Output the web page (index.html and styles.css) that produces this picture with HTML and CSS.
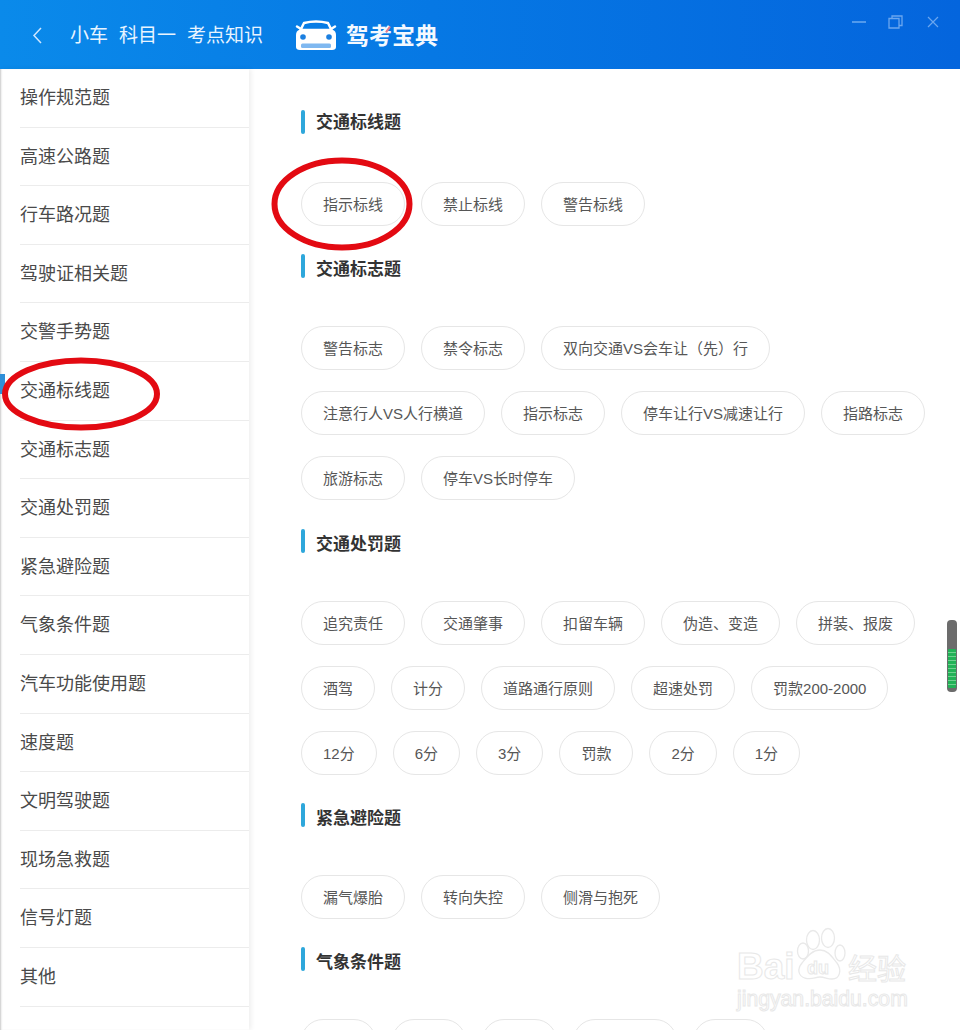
FILE: index.html
```html
<!DOCTYPE html>
<html lang="zh-CN">
<head>
<meta charset="utf-8">
<title>考点知识</title>
<link rel="stylesheet" href="styles.css">
</head>
<body>
<div class="app">
  <header class="topbar">
    <svg class="back" width="10" height="17" viewBox="0 0 10 17"><path d="M9 1L2 8.5L9 16" fill="none" stroke="#cfe6ff" stroke-width="1.5"/></svg>
    <div class="crumbs"><span>小车</span><span>科目一</span><span>考点知识</span></div>
    <div class="brand">
      <svg class="car" width="42" height="31" viewBox="0 0 42 31">
        <path d="M6 9L2 6.500M36 9L40 6.500" stroke="#fff" stroke-width="2.500" stroke-linecap="round"/>
        <path d="M9 3Q21 0 33 3L36.500 10H5.500Z" fill="none" stroke="#fff" stroke-width="2.500"/>
        <path d="M4 10H38Q41 11 41 15V27Q41 30 37 30H5Q1 30 1 27V15Q1 11 4 10Z" fill="#fff"/>
        <circle cx="8" cy="17" r="2.800" fill="#1b7fe0"/><circle cx="34" cy="17" r="2.800" fill="#1b7fe0"/>
        <rect x="6" y="23.500" width="30" height="4.500" rx="1.500" fill="#7fb8f0"/>
      </svg>
      <span class="brand-name">驾考宝典</span>
    </div>
    <div class="win-controls">
      <svg class="win-min" width="14" height="2" viewBox="0 0 14 2"><path d="M0 1H14" stroke="#86bbf5" stroke-width="1.200"/></svg>
      <svg width="15" height="14" viewBox="0 0 15 14"><path d="M1 3.500H11V13H1ZM4 3.500V1H14V10.500H11" fill="none" stroke="#6aa6ef" stroke-width="1.300"/></svg>
      <svg width="12" height="12" viewBox="0 0 12 12"><path d="M1 1L11 11M11 1L1 11" stroke="#6aa6ef" stroke-width="1.200"/></svg>
    </div>
  </header>
  <div class="body">
    <nav class="sidebar">
      <a class="nav-item">操作规范题</a>
      <a class="nav-item">高速公路题</a>
      <a class="nav-item">行车路况题</a>
      <a class="nav-item">驾驶证相关题</a>
      <a class="nav-item">交警手势题</a>
      <a class="nav-item is-active">交通标线题</a>
      <a class="nav-item">交通标志题</a>
      <a class="nav-item">交通处罚题</a>
      <a class="nav-item">紧急避险题</a>
      <a class="nav-item">气象条件题</a>
      <a class="nav-item">汽车功能使用题</a>
      <a class="nav-item">速度题</a>
      <a class="nav-item">文明驾驶题</a>
      <a class="nav-item">现场急救题</a>
      <a class="nav-item">信号灯题</a>
      <a class="nav-item">其他</a>
    </nav>
    <main class="content">
      <section class="group group-first">
        <h2 class="group-title">交通标线题</h2>
        <div class="chips">
          <span class="chip">指示标线</span><span class="chip">禁止标线</span><span class="chip">警告标线</span>
        </div>
      </section>
      <section class="group">
        <h2 class="group-title">交通标志题</h2>
        <div class="chips">
          <span class="chip">警告标志</span><span class="chip">禁令标志</span><span class="chip">双向交通VS会车让（先）行</span>
          <span class="chip">注意行人VS人行横道</span><span class="chip">指示标志</span><span class="chip">停车让行VS减速让行</span><span class="chip">指路标志</span>
          <span class="chip">旅游标志</span><span class="chip">停车VS长时停车</span>
        </div>
      </section>
      <section class="group">
        <h2 class="group-title">交通处罚题</h2>
        <div class="chips">
          <span class="chip">追究责任</span><span class="chip">交通肇事</span><span class="chip">扣留车辆</span><span class="chip">伪造、变造</span><span class="chip">拼装、报废</span>
          <span class="chip">酒驾</span><span class="chip">计分</span><span class="chip">道路通行原则</span><span class="chip">超速处罚</span><span class="chip">罚款200-2000</span>
          <span class="chip">12分</span><span class="chip">6分</span><span class="chip">3分</span><span class="chip">罚款</span><span class="chip">2分</span><span class="chip">1分</span>
        </div>
      </section>
      <section class="group">
        <h2 class="group-title">紧急避险题</h2>
        <div class="chips">
          <span class="chip">漏气爆胎</span><span class="chip">转向失控</span><span class="chip">侧滑与抱死</span>
        </div>
      </section>
      <section class="group">
        <h2 class="group-title">气象条件题</h2>
        <div class="chips">
          <span class="chip chip-blank"></span><span class="chip chip-blank"></span><span class="chip chip-blank"></span><span class="chip chip-blank chip-blank-wide"></span><span class="chip chip-blank"></span>
        </div>
      </section>
    </main>
  </div>

  <svg class="annotations" width="960" height="1030" viewBox="0 0 960 1030">
    <ellipse cx="342" cy="204" rx="67.500" ry="43.500" fill="none" stroke="#e30a12" stroke-width="6"/>
    <ellipse cx="81" cy="394" rx="76" ry="33.500" fill="none" stroke="#e30a12" stroke-width="6"/>
  </svg>

  <div class="gauge"><div class="gauge-fill"></div></div>

  <div class="watermark">
    <svg class="paw" width="56" height="62" viewBox="0 0 56 62" fill="none" stroke="#e9e9e9" stroke-width="1.300">
      <ellipse cx="20" cy="13" rx="6.500" ry="9.500"/><ellipse cx="35" cy="11" rx="6.500" ry="9.500"/>
      <ellipse cx="10" cy="24" rx="5.500" ry="8"/><ellipse cx="47" cy="26" rx="5" ry="8"/>
      <path d="M27 23C35 23 39 30 44 36C49 43 47 52 39 52C34 52 32 50 27 50C22 50 19 53 12 51C5 49 4 42 9 36C14 30 19 23 27 23Z"/>
    </svg>
    <span class="wm-bai">Bai</span>
    <span class="wm-du">du</span>
    <span class="wm-cn">经验</span>
    <span class="wm-url">jingyan.baidu.com</span>
  </div>
</div>
</body>
</html>
```
FILE: styles.css
```css
* { box-sizing: border-box; }
html, body { margin: 0; padding: 0; background: #fff; }
body { font-family: "Liberation Sans", "Noto Sans CJK SC", sans-serif; }

.app { position: relative; width: 960px; height: 1030px; overflow: hidden; background: #fff; }

.topbar {
  display: flex;
  align-items: center;
  height: 69px;
  padding-left: 32px;
  color: #fff;
  background: linear-gradient(90deg, #0a8aea 0%, #0678e4 45%, #0465dd 100%);
}
.back { flex: none; margin-top: 2px; }
.crumbs { display: flex; gap: 11px; margin: 3px 0 0 28px; font-size: 19px; line-height: 32px; color: #e8f4ff; }
.brand { display: flex; align-items: center; gap: 9px; margin-left: 32px; }
.car { display: block; margin-top: 2px; }
.brand-name { position: relative; margin-top: 2px; font-size: 23px; font-weight: 700; line-height: 32px; color: #f4f9ff; }
.brand-name::after {
  content: "";
  position: absolute;
  left: 41px;
  top: 6px;
  width: 2px;
  height: 7px;
  background: #e8798a;
  transform: rotate(35deg);
}
.win-controls {
  display: flex;
  align-items: center;
  gap: 24px;
  align-self: flex-start;
  margin-left: auto;
  padding: 15px 21px 0 0;
}
.win-controls svg { display: block; }
.win-min { margin-top: -1px; margin-right: -2px; }

.body { display: flex; height: 961px; }

.sidebar {
  flex: none;
  display: flex;
  flex-direction: column;
  width: 249px;
  padding-left: 20px;
  box-shadow: inset 2px 0 2px -1px #c9c9c9, 2px 0 5px rgba(0, 0, 0, 0.07);
  background: #fff;
}
.nav-item {
  position: relative;
  flex: none;
  height: 58.6px;
  line-height: 58px;
  font-size: 18px;
  color: #4a4a4a;
  border-bottom: 1px solid #ececec;
}
.nav-item.is-active::before {
  content: "";
  position: absolute;
  left: -20px;
  top: 12px;
  width: 5px;
  height: 20px;
  background: #2f8fd8;
}

.content { flex: 1; min-width: 0; padding: 41px 14px 0 52px; }
.group { margin-bottom: 31.300px; }
.group-title {
  position: relative;
  height: 24px;
  margin: 0 0 45px;
  padding-left: 15px;
  font-size: 17px;
  font-weight: 700;
  line-height: 26px;
  color: #333;
}
.group-first .group-title { margin-bottom: 48px; }
.group-title::before {
  content: "";
  position: absolute;
  left: 0;
  top: -3px;
  width: 4px;
  height: 24px;
  border-radius: 2px;
  background: #2ea7db;
}
.group-first .group-title::before { top: 0; }
.chips { display: flex; flex-wrap: wrap; gap: 21px 16px; }
.chip {
  height: 44px;
  padding: 0 21px;
  border: 1px solid #e6e6e6;
  border-radius: 22px;
  font-size: 15px;
  line-height: 43px;
  color: #565656;
  background: #fff;
  white-space: nowrap;
}
.chip-blank { width: 74.500px; }
.chip-blank-wide { width: 104.500px; }

.annotations { position: absolute; left: 0; top: 0; pointer-events: none; }

.gauge {
  position: absolute;
  left: 947px;
  top: 620px;
  width: 10px;
  height: 72px;
  padding-top: 29px;
  border-radius: 4px;
  background: #6c6c6c;
}
.gauge-fill {
  width: 8px;
  height: 39px;
  margin-left: 1px;
  border-radius: 1px;
  background: repeating-linear-gradient(180deg, #22b257 0, #22b257 3px, #6fd08f 3px, #6fd08f 4px);
}

.watermark { position: absolute; left: 737px; top: 925px; width: 175px; height: 90px; }
.paw { position: absolute; left: 56px; top: 2px; }
.wm-bai, .wm-du, .wm-cn, .wm-url {
  position: absolute;
  white-space: nowrap;
  color: #fff;
  -webkit-text-stroke: 1px #e8e8e8;
  font-family: "Liberation Sans", sans-serif;
}
.wm-bai { left: 0; top: 19px; font-size: 37px; line-height: 46px; font-weight: 700; }
.wm-du { left: 70px; top: 32px; font-size: 18px; line-height: 22px; font-weight: 700; }
.wm-cn { left: 111px; top: 24px; font-size: 29px; line-height: 36px; font-family: "Noto Sans CJK SC", sans-serif; }
.wm-url { left: 0; top: 62px; font-size: 21.200px; line-height: 24px; }
```
